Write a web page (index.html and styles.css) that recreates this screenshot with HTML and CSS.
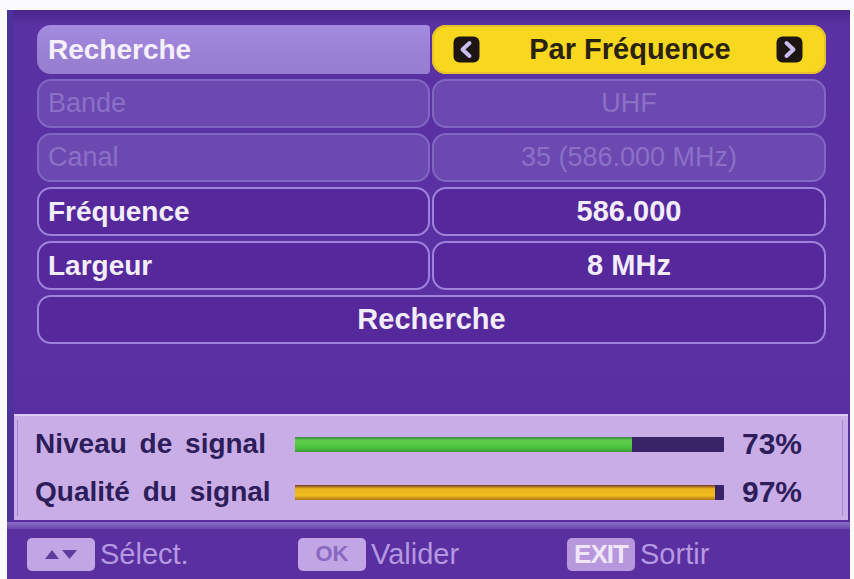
FILE: index.html
```html
<!DOCTYPE html>
<html lang="fr">
<head>
<meta charset="utf-8">
<title>Recherche</title>
<link rel="stylesheet" href="styles.css">
</head>
<body>
<div class="screen">
  <div class="menu">
    <div class="row">
      <div class="cell sel-label">Recherche</div>
      <div class="cell sel-value">
        <svg class="arrow" viewBox="0 0 27 27" width="27" height="27"><rect x="0.5" y="0.5" width="26" height="26" rx="6" fill="#1d1512"/><path d="M16.5 7 L9.5 13.5 L16.5 20" fill="none" stroke="#c9bdf0" stroke-width="4" stroke-linecap="round" stroke-linejoin="round"/></svg>
        <span class="val-text">Par Fréquence</span>
        <svg class="arrow" viewBox="0 0 27 27" width="27" height="27"><rect x="0.5" y="0.5" width="26" height="26" rx="6" fill="#1d1512"/><path d="M10.5 7 L17.5 13.5 L10.5 20" fill="none" stroke="#c9bdf0" stroke-width="4" stroke-linecap="round" stroke-linejoin="round"/></svg>
      </div>
    </div>
    <div class="row">
      <div class="cell dis label">Bande</div>
      <div class="cell dis value">UHF</div>
    </div>
    <div class="row">
      <div class="cell dis label">Canal</div>
      <div class="cell dis value">35 (586.000 MHz)</div>
    </div>
    <div class="row">
      <div class="cell act label">Fréquence</div>
      <div class="cell act value">586.000</div>
    </div>
    <div class="row">
      <div class="cell act label">Largeur</div>
      <div class="cell act value">8 MHz</div>
    </div>
    <div class="row single">
      <div class="cell act value">Recherche</div>
    </div>
  </div>

  <div class="panel">
    <div class="panel-inner">
      <div class="sig-row">
        <span class="sig-label">Niveau de signal</span>
        <div class="bar"><div class="fill green" style="width:78.5%"></div></div>
        <span class="pct">73%</span>
      </div>
      <div class="sig-row">
        <span class="sig-label">Qualité du signal</span>
        <div class="bar"><div class="fill orange" style="width:98%"></div></div>
        <span class="pct">97%</span>
      </div>
    </div>
  </div>

  <div class="band"></div>

  <div class="footer">
    <div class="hint">
      <span class="key"><svg viewBox="0 0 34 12" width="34" height="12"><path d="M1 11 L8 2 L15 11 Z" fill="#5e3d9f"/><path d="M18 2 L33 2 L25.5 11 Z" fill="#5e3d9f"/></svg></span>
      <span class="hint-text">Sélect.</span>
    </div>
    <div class="hint">
      <span class="key key-ok">OK</span>
      <span class="hint-text">Valider</span>
    </div>
    <div class="hint">
      <span class="key key-exit">EXIT</span>
      <span class="hint-text">Sortir</span>
    </div>
  </div>
</div>
</body>
</html>
```
FILE: styles.css
```css
html, body {
  margin: 0;
  padding: 0;
  background: #fbfbfd;
}

body {
  font-family: "Liberation Sans", Arial, sans-serif;
}

.screen {
  margin: 10px 4px 0 7px;
  width: 843px;
  height: 569px;
  background: linear-gradient(#4a2790 0px, #5a31a2 16px, #5a30a2 60%, #56299e 100%);
  box-shadow: inset 6px 0 0 #4b3399;
  display: flex;
  flex-direction: column;
  overflow: hidden;
}

.menu {
  display: flex;
  flex-direction: column;
  gap: 5px;
  padding: 15px 24px 0 30px;
}

.row {
  display: grid;
  grid-template-columns: 393px 394px;
  column-gap: 2px;
  height: 49px;
}

.row.single {
  grid-template-columns: 789px;
}

.cell {
  box-sizing: border-box;
  display: flex;
  align-items: center;
  font-size: 28px;
  font-weight: bold;
  border-radius: 14px;
  white-space: nowrap;
}

.label {
  padding-left: 9px;
}

.value {
  justify-content: center;
}

.sel-label {
  padding-left: 11px;
  background: linear-gradient(#a58be0, #9a80d4 60%, #987ed0);
  color: #f6f0fc;
  border-radius: 14px 4px 4px 14px;
}

.sel-value {
  background: #f7d81e;
  box-shadow: inset 0 0 0 2px #e8c02a;
  color: #2a2210;
  justify-content: space-between;
  padding: 0 23px 0 21px;
  font-size: 29px;
}

.val-text {
  margin-left: 4px;
}

.arrow {
  display: block;
}

.dis {
  background: #6b49b0;
  border: 2px solid #8266c4;
  color: #8b70c8;
  font-weight: normal;
  font-size: 27px;
}

.act {
  background: #55289c;
  border: 2px solid #9f82dc;
  color: #f3ecfb;
}

.act.value {
  font-size: 29px;
}

.panel {
  margin: 70px 2px 0 7px;
  height: 106px;
  box-sizing: border-box;
  background: #c9ade6;
  border-top: 2px solid #dccaf2;
  padding: 4px 5px 4px 3px;
}

.panel-inner {
  height: 100%;
  box-sizing: border-box;
  border-left: 1px solid #a48ad0;
  border-right: 1px solid #a48ad0;
  padding-left: 17px;
  display: flex;
  flex-direction: column;
}

.sig-row {
  height: 48px;
  display: grid;
  grid-template-columns: 260px 429px auto;
  align-items: center;
}

.sig-label {
  font-size: 28px;
  font-weight: bold;
  color: #2d1d5a;
  word-spacing: 5px;
  white-space: nowrap;
}

.bar {
  height: 15px;
  background: #3a2468;
  border-radius: 1px;
  overflow: hidden;
}

.fill {
  height: 100%;
}

.green {
  background: linear-gradient(#3a8a40 0, #5ed04a 25%, #4cc23c 70%, #3c9a34 100%);
}

.orange {
  background: linear-gradient(#6c3a30 0, #eab51c 25%, #f0bd22 70%, #b07418 100%);
}

.pct {
  padding-left: 18px;
  font-size: 30px;
  font-weight: bold;
  color: #2d1d5a;
}

.band {
  height: 7px;
  margin-top: 2px;
  background: linear-gradient(#8a6cc2, #6a48ae);
}

.footer {
  flex: 1;
  display: grid;
  grid-template-columns: 271px 269px auto;
  padding-left: 20px;
  align-items: center;
  background: #5a2fa0;
}

.hint {
  display: flex;
  align-items: center;
  gap: 5px;
}

.key {
  width: 68px;
  height: 33px;
  border-radius: 5px;
  background: #c2a5e4;
  display: flex;
  align-items: center;
  justify-content: center;
  font-size: 24px;
  font-weight: bold;
}

.key-ok {
  color: #8a68c2;
  font-size: 22px;
}

.key-exit {
  color: #efe6fb;
  background: #b898dc;
  font-size: 26px;
  letter-spacing: -1px;
}

.hint-text {
  font-size: 29px;
  color: #b598e2;
}
```
